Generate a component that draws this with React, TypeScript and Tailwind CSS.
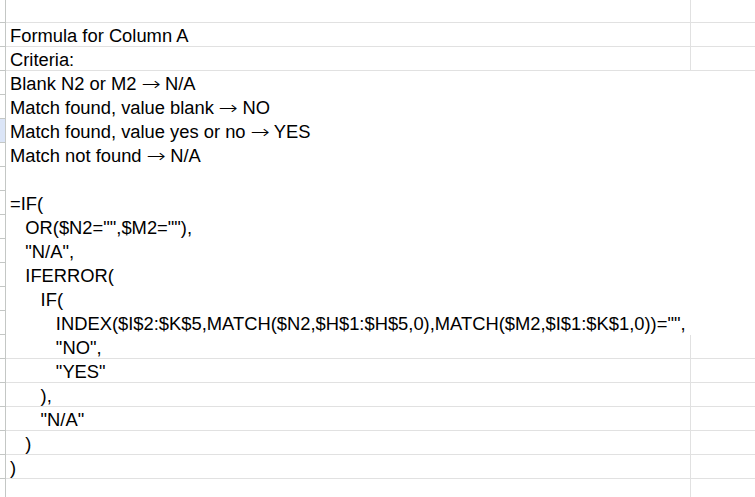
import React from "react";

type Row = { t: string; hide?: boolean; sel?: boolean };

const rows: Row[] = [
  { t: "Formula for Column A" },
  { t: "Criteria:" },
  { t: "Blank N2 or M2 \u2192 N/A", hide: true },
  { t: "Match found, value blank \u2192 NO", hide: true },
  { t: "Match found, value yes or no \u2192 YES", hide: true, sel: true },
  { t: "Match not found \u2192 N/A", hide: true },
  { t: "", hide: true },
  { t: "=IF(", hide: true },
  { t: "   OR($N2=\"\",$M2=\"\"),", hide: true },
  { t: "   \"N/A\",", hide: true },
  { t: "   IFERROR(", hide: true },
  { t: "      IF(", hide: true },
  { t: "         INDEX($I$2:$K$5,MATCH($N2,$H$1:$H$5,0),MATCH($M2,$I$1:$K$1,0))=\"\",", hide: true },
  { t: "         \"NO\"," },
  { t: "         \"YES\"" },
  { t: "      )," },
  { t: "      \"N/A\"" },
  { t: "   )" },
  { t: ")" },
  { t: "" },
];

function renderText(t: string) {
  const parts = t.split("\u2192");
  if (parts.length === 1) return t;
  return (
    <>
      {parts[0]}
      <span
        className="inline-block w-[18.4px] text-center font-extralight scale-x-[1.25]"
        style={{ fontFamily: '"DejaVu Sans", sans-serif' }}
      >
        {"\u2192"}
      </span>
      {parts[1]}
    </>
  );
}

export default function App() {
  return (
    <div
      className="w-[755px] h-[497px] overflow-hidden bg-white flex flex-col text-black"
      style={{ fontFamily: '"Liberation Sans", Arial, sans-serif' }}
    >
      <div className="flex h-[23px] shrink-0">
        <div className="w-[6px] border-r border-b border-[#c4c7c5]" />
        <div className="w-[685px] border-r border-b border-[#e1e1e1]" />
        <div className="flex-1 border-b border-[#e1e1e1]" />
      </div>
      {rows.map((r, i) => (
        <div key={i} className="flex h-[24px] shrink-0">
          <div
            className={
              r.sel
                ? "w-[6px] border-r border-b border-[#c4c7c5] bg-[#dbe5f7]"
                : "w-[6px] border-r border-b border-[#c4c7c5]"
            }
          />
          <div
            className={
              r.hide
                ? "w-[685px] border-b border-r border-white pl-[4px]"
                : "w-[685px] border-b border-r border-[#e1e1e1] pl-[4px]"
            }
          >
            <div className="whitespace-pre text-[18.35px] leading-[23px] pt-[1px] overflow-visible">
              {renderText(r.t)}
            </div>
          </div>
          <div
            className={
              r.hide
                ? "flex-1 border-b border-white"
                : "flex-1 border-b border-[#e1e1e1]"
            }
          />
        </div>
      ))}
    </div>
  );
}
